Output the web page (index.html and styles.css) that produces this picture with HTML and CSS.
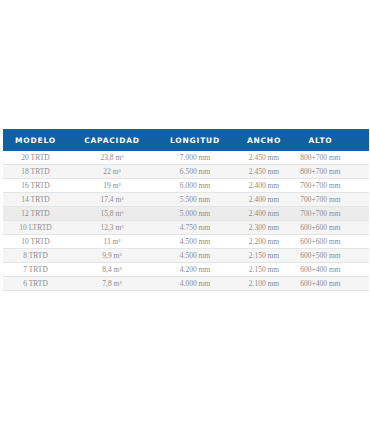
FILE: index.html
```html
<!DOCTYPE html>
<html lang="es">
<head>
<meta charset="utf-8">
<title>Modelos</title>
<link rel="stylesheet" href="styles.css">
</head>
<body>
<table class="spec">
  <colgroup>
    <col class="c1"><col class="c2"><col class="c3"><col class="c4"><col class="c5">
  </colgroup>
  <thead>
    <tr><th>MODELO</th><th>CAPACIDAD</th><th>LONGITUD</th><th>ANCHO</th><th class="last">ALTO</th></tr>
  </thead>
  <tbody>
    <tr><td>20 TRTD</td><td>23,8 m³</td><td>7.000 mm</td><td>2.450 mm</td><td class="last">800+700 mm</td></tr>
    <tr><td>18 TRTD</td><td>22 m³</td><td>6.500 mm</td><td>2.450 mm</td><td class="last">800+700 mm</td></tr>
    <tr><td>16 TRTD</td><td>19 m³</td><td>6.000 mm</td><td>2.400 mm</td><td class="last">700+700 mm</td></tr>
    <tr><td>14 TRTD</td><td>17,4 m³</td><td>5.500 mm</td><td>2.400 mm</td><td class="last">700+700 mm</td></tr>
    <tr class="hover"><td>12 TRTD</td><td>15,8 m³</td><td>5.000 mm</td><td>2.400 mm</td><td class="last">700+700 mm</td></tr>
    <tr><td>10 LTRTD</td><td>12,3 m³</td><td>4.750 mm</td><td>2.300 mm</td><td class="last">600+600 mm</td></tr>
    <tr><td>10 TRTD</td><td>11 m³</td><td>4.500 mm</td><td>2.200 mm</td><td class="last">600+600 mm</td></tr>
    <tr><td>8 TRTD</td><td>9,9 m³</td><td>4.500 mm</td><td>2.150 mm</td><td class="last">600+500 mm</td></tr>
    <tr><td>7 TRTD</td><td>8,4 m³</td><td>4.200 mm</td><td>2.150 mm</td><td class="last">600+400 mm</td></tr>
    <tr><td>6 TRTD</td><td>7,8 m³</td><td>4.000 mm</td><td>2.100 mm</td><td class="last">600+400 mm</td></tr>
  </tbody>
</table>
</body>
</html>
```

FILE: styles.css
```css
html, body {
  margin: 0;
  background: #ffffff;
}
body {
  padding: 129px 1px 0 3px;
}
.spec {
  width: 366px;
  border-collapse: collapse;
  table-layout: fixed;
}
.c1 { width: 65px; }
.c2 { width: 88px; }
.c3 { width: 78px; }
.c4 { width: 60px; }
.c5 { width: 75px; }
.spec th {
  background: #0f61a4;
  color: #ffffff;
  font-family: "DejaVu Sans", Verdana, sans-serif;
  font-weight: bold;
  font-size: 7.5px;
  letter-spacing: 0.8px;
  height: 22px;
  padding: 0;
  text-align: center;
  vertical-align: middle;
}
.spec td {
  font-family: "Liberation Serif", "Times New Roman", serif;
  font-size: 7.5px;
  color: #8c8c8c;
  text-align: center;
  height: 13px;
  padding: 0;
  border-bottom: 1px solid #e4e4e4;
  vertical-align: middle;
}
.spec .last {
  padding-right: 22px;
}
.spec tbody tr:nth-child(even) td {
  background: #f5f5f5;
}
.spec tbody tr.hover td {
  background: #ececec;
}
```
